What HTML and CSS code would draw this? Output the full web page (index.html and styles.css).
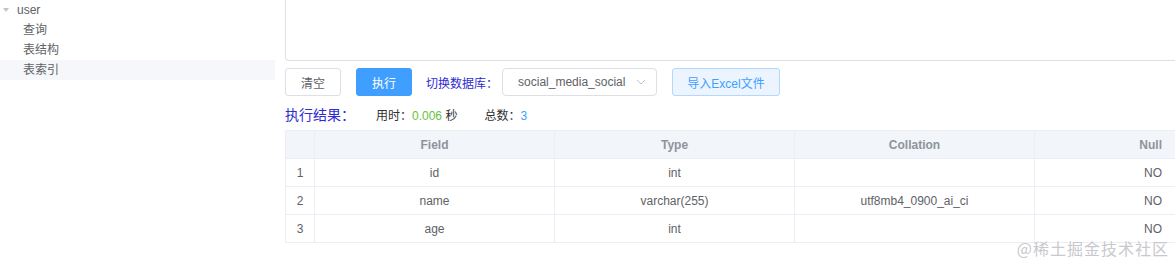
FILE: index.html
```html
<!DOCTYPE html>
<html lang="zh-CN">
<head>
    <meta charset="UTF-8">
    <title>SQL 查询</title>
    <link rel="stylesheet" href="styles.css">
</head>
<body>
    <div class="page">
        <aside class="sidebar">
            <div class="tree-node">
                <span class="caret"></span>
                <span>user</span>
            </div>
            <div class="tree-child">查询</div>
            <div class="tree-child">表结构</div>
            <div class="tree-child active">表索引</div>
        </aside>

        <main class="main">
            <div class="editor"></div>

            <div class="toolbar">
                <button class="btn">清空</button>
                <button class="btn btn-primary">执行</button>
                <span class="label">切换数据库：</span>
                <div class="select">
                    <span>social_media_social</span>
                    <svg class="arrow" width="10" height="6" viewBox="0 0 10 6"><path d="M1 1l4 4 4-4" fill="none" stroke="#c0c4cc" stroke-width="1"/></svg>
                </div>
                <button class="btn btn-plain">导入Excel文件</button>
            </div>

            <div class="result-bar">
                <span class="result-title">执行结果：</span>
                <span class="meta">用时：<span class="green">0.006</span> 秒</span>
                <span class="meta">总数：<span class="blue">3</span></span>
            </div>

            <table class="grid">
                <thead>
                    <tr>
                        <th class="idx"></th>
                        <th class="col">Field</th>
                        <th class="col">Type</th>
                        <th class="col">Collation</th>
                        <th class="right">Null</th>
                    </tr>
                </thead>
                <tbody>
                    <tr>
                        <td class="idx">1</td>
                        <td>id</td>
                        <td>int</td>
                        <td></td>
                        <td class="right">NO</td>
                    </tr>
                    <tr>
                        <td class="idx">2</td>
                        <td>name</td>
                        <td>varchar(255)</td>
                        <td>utf8mb4_0900_ai_ci</td>
                        <td class="right">NO</td>
                    </tr>
                    <tr>
                        <td class="idx">3</td>
                        <td>age</td>
                        <td>int</td>
                        <td></td>
                        <td class="right">NO</td>
                    </tr>
                </tbody>
            </table>
        </main>
    </div>

    <div class="watermark">@稀土掘金技术社区</div>
</body>
</html>
```

FILE: styles.css
```css
* {
    box-sizing: border-box;
    margin: 0;
    padding: 0;
}

body {
    font-family: "Liberation Sans", "Noto Sans CJK SC", sans-serif;
    font-size: 12px;
    color: #606266;
    background: #fff;
    width: 1175px;
    height: 263px;
    overflow: hidden;
    position: relative;
}

.page {
    display: flex;
    align-items: flex-start;
}

/* tree on the left */
.sidebar {
    width: 275px;
    flex-shrink: 0;
}

.tree-node {
    display: flex;
    align-items: center;
    height: 20px;
    padding-left: 3px;
    color: #606266;
    font-size: 12px;
}

.caret {
    width: 0;
    height: 0;
    border-left: 3px solid transparent;
    border-right: 3px solid transparent;
    border-top: 4px solid #c0c4cc;
    margin-right: 8px;
}

.tree-child {
    height: 20px;
    line-height: 20px;
    padding-left: 23px;
    color: #606266;
}

.tree-child.active {
    background-color: #f5f7fa;
}

/* main area */
.main {
    flex: 1;
    margin-left: 10px;
    margin-right: -30px;
}

.editor {
    height: 61px;
    border: 1px solid #dcdfe6;
    border-top: none;
    border-radius: 0 0 4px 4px;
}

.toolbar {
    display: flex;
    align-items: center;
    margin-top: 7px;
    height: 28px;
}

.btn {
    height: 28px;
    padding: 0 15px;
    font-family: inherit;
    font-size: 12px;
    color: #606266;
    background: #fff;
    border: 1px solid #dcdfe6;
    border-radius: 3px;
    cursor: pointer;
    margin-right: 15px;
}

.btn-primary {
    color: #fff;
    background-color: #409eff;
    border-color: #409eff;
    margin-right: 14px;
}

.btn-plain {
    color: #409eff;
    background-color: #ecf5ff;
    border-color: #b3d8ff;
    width: 108px;
    padding: 0;
}

.label {
    color: #2f2bd1;
    font-size: 12px;
    margin-right: 4px;
}

.select {
    display: flex;
    align-items: center;
    justify-content: space-between;
    width: 155px;
    height: 28px;
    padding: 0 10px 0 15px;
    border: 1px solid #dcdfe6;
    border-radius: 4px;
    font-size: 12px;
    color: #606266;
    margin-right: 15px;
}

.result-bar {
    display: flex;
    align-items: center;
    height: 20px;
    margin-top: 8px;
}

.result-title {
    color: #2f2bd1;
    font-size: 14px;
    width: 91px;
}

.meta {
    color: #303133;
    margin-right: 27px;
}

.green {
    color: #67c23a;
}

.blue {
    color: #409eff;
}

/* result table */
.grid {
    width: 100%;
    margin-top: 6px;
    border-collapse: collapse;
    table-layout: fixed;
}

.grid th,
.grid td {
    height: 28px;
    text-align: center;
    border-bottom: 1px solid #ebeef5;
    border-right: 1px solid #ebeef5;
    font-size: 12px;
    color: #606266;
}

.grid th {
    background-color: #f2f5fa;
    color: #909399;
    font-weight: bold;
    border-top: 1px solid #ebeef5;
}

.grid .idx {
    width: 29px;
    border-left: 1px solid #ebeef5;
}

.grid .col {
    width: 240px;
}

.grid .right {
    text-align: right;
    padding-right: 42px;
}

.watermark {
    position: absolute;
    right: 6px;
    bottom: 7px;
    font-family: "Noto Sans CJK SC", sans-serif;
    font-size: 16px;
    line-height: 16px;
    color: #c8c9cc;
    letter-spacing: 1px;
    text-shadow: 0 0 2px #fff;
}
```
